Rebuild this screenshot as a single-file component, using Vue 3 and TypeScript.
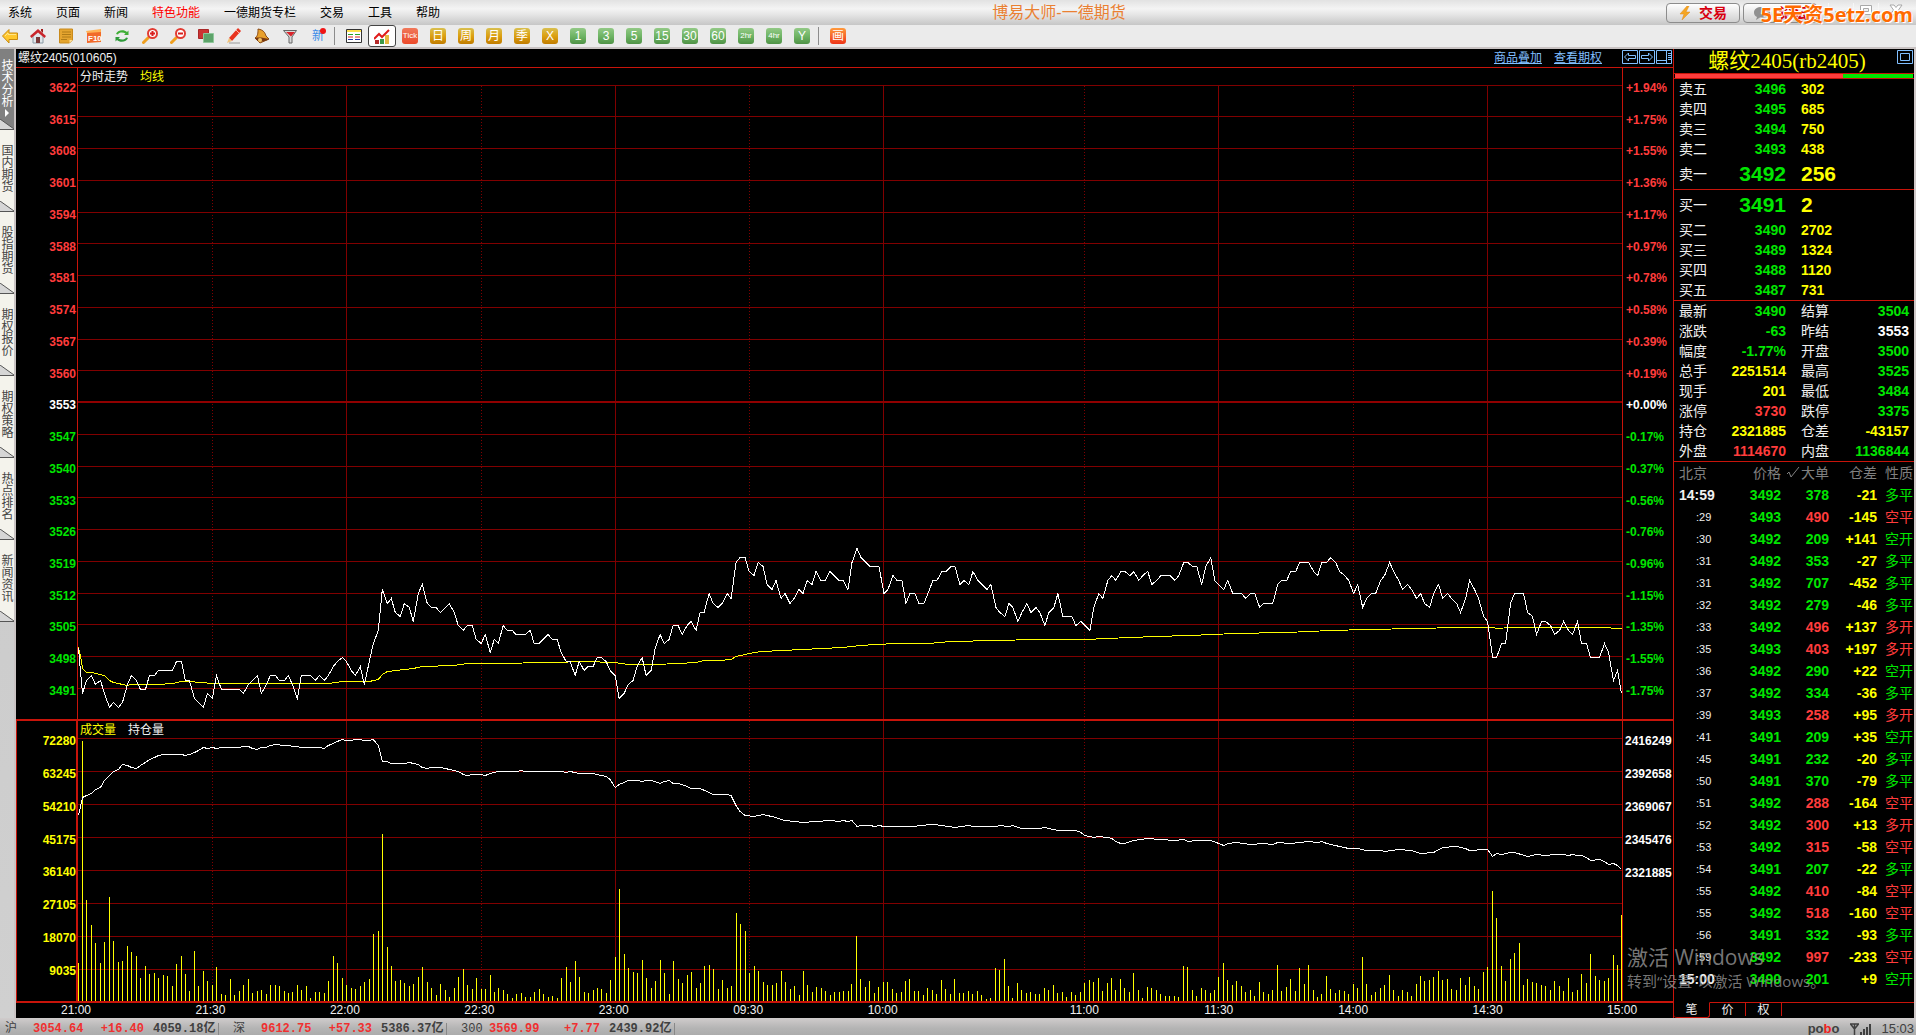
<script setup lang="ts">
interface Menu { text: string; hot?: boolean }
interface Level { name: string; price: string; qty: string; big?: boolean }
interface Stat { a: string; av: string; ac: string; b: string; bv: string; bc: string }
interface Tick { time: string; full?: boolean; price: string; qty: string; up: boolean; diff: string; kind: string }

const menus: Menu[] = [
  { text: '系统' }, { text: '页面' }, { text: '新闻' }, { text: '特色功能', hot: true },
  { text: '一德期货专栏' }, { text: '交易' }, { text: '工具' }, { text: '帮助' },
]

const periods = [
  { text: 'Tick', tone: 'red' }, { text: '日', tone: 'gold' }, { text: '周', tone: 'gold' },
  { text: '月', tone: 'gold' }, { text: '季', tone: 'gold' }, { text: 'X', tone: 'gold' },
  { text: '1', tone: 'green' }, { text: '3', tone: 'green' }, { text: '5', tone: 'green' },
  { text: '15', tone: 'green' }, { text: '30', tone: 'green' }, { text: '60', tone: 'green' },
  { text: '2hr', tone: 'green' }, { text: '4hr', tone: 'green' }, { text: 'Y', tone: 'green' },
]

const sideTabs = ['技术分析', '国内期货', '股指期货', '期权报价', '期权策略', '热点排名', '新闻资讯']

const priceLabels = ['3622', '3615', '3608', '3601', '3594', '3588', '3581', '3574', '3567', '3560', '3553',
  '3547', '3540', '3533', '3526', '3519', '3512', '3505', '3498', '3491']
const pctLabels = ['+1.94%', '+1.75%', '+1.55%', '+1.36%', '+1.17%', '+0.97%', '+0.78%', '+0.58%', '+0.39%', '+0.19%',
  '+0.00%', '-0.17%', '-0.37%', '-0.56%', '-0.76%', '-0.96%', '-1.15%', '-1.35%', '-1.55%', '-1.75%']
const volLabels = ['72280', '63245', '54210', '45175', '36140', '27105', '18070', '9035']
const oiLabels = ['2416249', '2392658', '2369067', '2345476', '2321885']
const tone = (i: number): string => (i < 10 ? 'up' : i === 10 ? 'flat' : 'down')

const priceGrid = [17, 48, 80, 112, 144, 175, 207, 239, 271, 302, 366, 398, 429, 461, 493, 525, 556, 588, 620]
const volGrid = [17, 50, 83, 116, 149, 182, 215, 248]

/* trading minutes between two neighbouring time marks */
const marks = [
  { text: '21:00', span: 30 }, { text: '21:30', span: 30 }, { text: '22:00', span: 30 }, { text: '22:30', span: 30 },
  { text: '23:00', span: 30 }, { text: '09:30', span: 30 }, { text: '10:00', span: 45 }, { text: '11:00', span: 30 },
  { text: '11:30', span: 30 }, { text: '14:00', span: 30 }, { text: '14:30', span: 30 }, { text: '15:00', span: 0 },
]
const minutes = 345
const width = 1545
const xAt = (i: number): number => Math.min(Math.floor((i * width) / minutes), width - 1) + 0.5
const solidX = [60, 120, 180, 255, 315].map(xAt)
const dottedX = [30, 90, 150, 225, 285].map(xAt)

/* last price per minute, counted from 3400 */
const prices = [
  100, 90, 93, 94, 92, 93, 90, 87, 88, 87, 88, 92, 94, 93, 91, 91, 94, 94, 95, 95, 95, 95, 97, 97, 93, 93, 89, 88, 87, 90,
  89, 94, 91, 91, 91, 91, 91, 90, 92, 93, 94, 90, 92, 94, 94, 93, 93, 94, 92, 89, 94, 94, 94, 93, 94, 93, 94, 96, 97, 98,
  97, 95, 94, 96, 92, 97, 101, 104, 113, 110, 111, 108, 107, 110, 109, 106, 112, 114, 110, 109, 109, 108, 109, 110, 108, 105, 104, 105, 105, 102,
  101, 103, 99, 102, 101, 105, 104, 104, 103, 103, 103, 104, 101, 101, 102, 103, 102, 102, 99, 97, 97, 94, 97, 95, 96, 96, 98, 98, 97, 95,
  94, 89, 90, 92, 93, 96, 98, 94, 95, 100, 103, 101, 102, 105, 105, 103, 105, 106, 104, 108, 108, 112, 110, 109, 110, 112, 111, 119, 120, 120,
  117, 116, 119, 118, 114, 113, 115, 111, 112, 110, 111, 113, 112, 115, 114, 117, 115, 115, 117, 116, 115, 115, 113, 119, 122, 120, 119, 118, 118, 118,
  112, 113, 116, 115, 115, 110, 112, 112, 110, 110, 112, 115, 115, 117, 117, 118, 118, 114, 115, 114, 117, 115, 114, 113, 114, 109, 108, 107, 110, 109,
  106, 108, 110, 108, 109, 108, 105, 108, 109, 112, 107, 107, 107, 105, 106, 105, 104, 109, 112, 111, 115, 116, 115, 117, 117, 116, 117, 115, 116, 117,
  114, 115, 116, 116, 116, 115, 116, 119, 119, 118, 118, 114, 118, 120, 115, 114, 113, 115, 112, 112, 112, 111, 112, 112, 109, 110, 110, 110, 114, 115,
  115, 117, 117, 119, 119, 119, 117, 116, 119, 119, 120, 119, 117, 116, 115, 112, 114, 109, 111, 112, 112, 115, 116, 119, 117, 115, 113, 114, 113, 111,
  112, 110, 109, 112, 114, 111, 112, 111, 110, 108, 111, 115, 113, 111, 107, 106, 98, 98, 101, 101, 110, 112, 112, 112, 108, 107, 103, 106, 106, 105,
  103, 104, 106, 104, 103, 106, 101, 101, 98, 98, 98, 101, 99, 93, 95, 90,
]
const priceLine = prices.map((p, i) => `${xAt(i)},${Math.round(620.6 - (p - 91) * 4.53) + 0.5}`).join(' ')

/* average price: minute, depth in thirds of a unit */
const average: number[][] = [
  [0, 352], [0.5, 375], [1, 415], [2, 427], [3, 428], [6, 437], [7, 451], [8, 458], [11, 466], [12, 463], [18, 463], [21, 459],
  [23, 454], [25, 455], [30, 459], [56, 460], [59, 455], [65, 454], [67, 447], [68, 432], [69, 423], [75, 414], [77, 409],
  [84, 405], [87, 401], [93, 399], [106, 397], [113, 395], [120, 397], [123, 402], [129, 403], [134, 399], [138, 396],
  [140, 392], [143, 390], [146, 387], [147, 380], [149, 374], [151, 368], [153, 365], [157, 361], [162, 358], [166, 355],
  [171, 352], [175, 347], [178, 344], [183, 341], [190, 339], [195, 335], [205, 332], [214, 328], [225, 328], [230, 325],
  [235, 323], [241, 320], [248, 317], [254, 314], [258, 311], [270, 308], [275, 304], [280, 301], [288, 298], [299, 295],
  [308, 292], [316, 292], [317, 295], [320, 292], [342, 292], [343, 295], [345, 295],
]
const averageLine = average.map(([i, c]) => `${xAt(i)},${Math.round(462 + c / 3 - 0.5) + 0.5}`).join(' ')

/* open interest: minute, depth in thirds of a unit */
const oiNight: number[][] = [
  [0, 345], [1, 293], [2, 287], [3, 279], [4, 268], [5, 262], [6, 240], [7, 226], [8, 215], [9, 208], [10, 193], [11, 196],
  [12, 202], [13, 206], [14, 197], [15, 187], [16, 177], [17, 172], [18, 167], [19, 163], [23, 163], [24, 166], [25, 163],
  [26, 156], [27, 151], [28, 143], [29, 145], [30, 143], [31, 145], [32, 142], [36, 142], [37, 139], [38, 139], [39, 145],
  [40, 149], [41, 142], [42, 142], [43, 136], [44, 133], [46, 136], [49, 139], [50, 142], [54, 142], [55, 144], [56, 136],
  [57, 131], [58, 124], [59, 118], [60, 121], [61, 121], [62, 118], [63, 118], [64, 121], [65, 121], [66, 118], [67, 136],
  [68, 184], [69, 185], [70, 190], [73, 190], [74, 187], [76, 193], [77, 202], [78, 205], [79, 202], [81, 202], [82, 205],
  [84, 211], [85, 215], [86, 222], [87, 226], [88, 223], [90, 223], [91, 226], [92, 220], [94, 214], [98, 214], [99, 211],
  [100, 214], [108, 214], [109, 217], [110, 214], [112, 220], [115, 220], [117, 226], [118, 229], [119, 238], [120, 263],
  [121, 252], [122, 247], [123, 241], [125, 241], [126, 244], [127, 241], [128, 241], [129, 244], [130, 250], [131, 244],
  [132, 241], [133, 250],
]
const oiDay: number[][] = [
  [134, 160], [136, 170], [137, 174], [139, 176], [141, 187], [142, 193], [145, 193], [146, 196], [147, 225], [148, 245],
  [149, 256], [151, 259], [153, 253], [156, 261], [157, 268], [158, 271], [160, 274], [162, 277], [165, 274], [168, 271],
  [170, 274], [171, 271], [172, 274], [173, 271], [174, 290], [175, 286], [177, 286], [178, 290], [179, 286], [180, 289],
  [187, 289], [188, 286], [191, 283], [193, 287], [196, 292], [199, 286], [200, 290], [205, 289], [206, 286], [208, 289],
  [209, 286], [210, 292], [211, 295], [215, 295], [216, 292], [219, 301], [223, 301], [224, 308], [225, 316], [226, 320],
  [227, 322], [228, 319], [230, 323], [231, 325], [232, 334], [233, 340], [234, 340], [236, 331], [239, 325], [242, 328],
  [245, 331], [247, 328], [248, 334], [250, 331], [253, 331], [255, 340], [256, 346], [257, 340], [259, 337], [262, 343],
  [265, 340], [267, 343], [268, 337], [271, 340], [275, 334], [277, 337], [278, 334], [279, 340], [282, 348], [284, 355],
  [286, 355], [288, 361], [291, 361], [292, 364], [295, 358], [298, 361], [300, 370], [303, 367], [305, 352], [308, 349],
  [310, 354], [311, 361], [312, 361], [313, 358], [315, 359], [316, 379], [317, 370], [318, 373], [320, 367], [321, 367],
  [324, 379], [326, 373], [328, 376], [330, 373], [332, 373], [333, 376], [334, 373], [335, 376], [336, 377], [337, 382],
  [338, 391], [340, 388], [341, 395], [342, 403], [343, 400], [344, 406], [345, 419],
]
const oiLine = [...oiNight, ...oiDay.map(([i, c]) => [i, c + 90])]
  .map(([i, c]) => `${xAt(i)},${Math.round(c / 3 - 21.5) + 0.5}`).join(' ')

/* volume bar tops per minute, in thirds of a unit */
const volNight = [
  789, 123, 600, 675, 729, 789, 726, 591, 723, 786, 783, 738, 756, 768, 834, 798, 822, 819, 834, 825, 828, 858, 792, 768, 822, 873, 753, 858, 813, 843,
  855, 801, 882, 885, 837, 885, 873, 855, 837, 879, 873, 870, 882, 855, 855, 858, 873, 879, 876, 855, 870, 858, 894, 876, 876, 879, 843, 768, 789, 834,
  855, 864, 867, 858, 846, 837, 702, 693, 402, 741, 798, 843, 840, 849, 858, 852, 831, 801, 846, 864, 885, 852, 870, 891, 864, 831, 807, 855, 867, 834,
  867, 867, 825, 876, 864, 870, 882, 894, 882, 879, 891, 891, 876, 867, 882, 891, 888, 894, 834, 801, 846, 783, 831, 876, 879, 870, 864, 867, 879, 840,
  771, 567, 762, 804, 816, 819, 780, 834, 864, 843, 780, 819, 882, 783, 837,
]
const volDay = [
  759, 735, 726, 774, 759, 708, 705, 717, 777, 750, 774, 768, 549, 582, 603, 729, 708, 723, 756, 765, 765, 759, 723, 756, 777, 768, 795, 723, 765, 786,
  771, 774, 783, 795, 786, 786, 783, 783, 762, 618, 747, 771, 753, 789, 771, 756, 756, 777, 789, 786, 753, 747, 783, 783, 795, 774, 780, 792, 750, 777,
  792, 747, 789, 789, 783, 792, 783, 795, 807, 804, 714, 720, 687, 768, 804, 759, 780, 789, 786, 792, 792, 774, 780, 765, 789, 786, 801, 786, 795, 786,
  759, 750, 756, 744, 783, 759, 744, 780, 747, 774, 786, 729, 780, 804, 771, 774, 780, 792, 798, 798, 798, 801, 708, 711, 780, 798, 774, 780, 789, 780,
  741, 699, 750, 765, 753, 768, 786, 780, 798, 756, 786, 792, 780, 705, 783, 771, 747, 783, 714, 762, 705, 780, 801, 792, 738, 777, 789, 780, 783, 792,
  762, 774, 681, 762, 795, 786, 774, 765, 735, 780, 798, 780, 786, 798, 762, 738, 753, 750, 741, 723, 750, 747, 777, 780, 744, 765, 741, 768, 777, 726,
  711, 483, 564, 708, 753, 687, 669, 639, 765, 747, 756, 759, 765, 768, 780, 753, 768, 783, 744, 786, 780, 732, 759, 672, 738, 750, 753, 744, 675, 705,
  555,
]
const volBars = [...volNight.map(v => 903 - v), ...volDay.map(v => 812 - v)]
  .map((h, i) => `M${xAt(i)} 280V${280 - Math.round(h / 3)}`).join('')

const asks: Level[] = [
  { name: '卖五', price: '3496', qty: '302' }, { name: '卖四', price: '3495', qty: '685' },
  { name: '卖三', price: '3494', qty: '750' }, { name: '卖二', price: '3493', qty: '438' },
  { name: '卖一', price: '3492', qty: '256', big: true },
]
const bids: Level[] = [
  { name: '买一', price: '3491', qty: '2', big: true }, { name: '买二', price: '3490', qty: '2702' },
  { name: '买三', price: '3489', qty: '1324' }, { name: '买四', price: '3488', qty: '1120' },
  { name: '买五', price: '3487', qty: '731' },
]
const stats: Stat[] = [
  { a: '最新', av: '3490', ac: 'down', b: '结算', bv: '3504', bc: 'down' },
  { a: '涨跌', av: '-63', ac: 'down', b: '昨结', bv: '3553', bc: 'flat' },
  { a: '幅度', av: '-1.77%', ac: 'down', b: '开盘', bv: '3500', bc: 'down' },
  { a: '总手', av: '2251514', ac: 'qty', b: '最高', bv: '3525', bc: 'down' },
  { a: '现手', av: '201', ac: 'qty', b: '最低', bv: '3484', bc: 'down' },
  { a: '涨停', av: '3730', ac: 'up', b: '跌停', bv: '3375', bc: 'down' },
  { a: '持仓', av: '2321885', ac: 'qty', b: '仓差', bv: '-43157', bc: 'qty' },
  { a: '外盘', av: '1114670', ac: 'up', b: '内盘', bv: '1136844', bc: 'down' },
]

const rawTicks = `14:59 3492 378 -21 多平
:29 3493 490 -145 空平
:30 3492 209 +141 空开
:31 3492 353 -27 多平
:31 3492 707 -452 多平
:32 3492 279 -46 多平
:33 3492 496 +137 多开
:35 3493 403 +197 多开
:36 3492 290 +22 空开
:37 3492 334 -36 多平
:39 3493 258 +95 多开
:41 3491 209 +35 空开
:45 3491 232 -20 多平
:50 3491 370 -79 多平
:51 3492 288 -164 空平
:52 3492 300 +13 多开
:53 3492 315 -58 空平
:54 3491 207 -22 多平
:55 3492 410 -84 空平
:55 3492 518 -160 空平
:56 3491 332 -93 多平
:59 3492 997 -233 空平
15:00 3490 201 +9 空开`
const ticks: Tick[] = rawTicks.split('\n').map(line => {
  const [time, price, qty, diff, kind] = line.split(' ')
  return { time, full: time.length > 3, price, qty, diff, kind, up: kind === '空平' || kind === '多开' }
})

const indices = [
  { name: '沪', price: '3054.64', change: '+16.40', amount: '4059.18亿' },
  { name: '深', price: '9612.75', change: '+57.33', amount: '5386.37亿' },
  { name: '300', price: '3569.99', change: '+7.77', amount: '2439.92亿' },
]
</script>

<template>
  <div class="app">
    <header class="menubar">
      <nav class="menus">
        <a v-for="m in menus" :key="m.text" href="#" :class="{ hot: m.hot }">{{ m.text }}</a>
      </nav>
      <h1>博易大师-一德期货</h1>
      <div class="window-tools">
        <button class="pill" type="button">
          <svg width="12" height="14" viewBox="0 0 12 14"><path d="M8 0L1 8h4L3 14l8-8H7l3-6z" fill="#f5a623" stroke="#e08a1a" stroke-width=".5" /></svg>
          交易
        </button>
        <button class="pill" type="button">
          <svg width="18" height="14" viewBox="0 0 18 14"><path d="M9 1C4 1 1 3 1 6.500c0 2 1 3.500 3 4.500L3 14l4-2.500c7 .5 10-2 10-5C17 3 14 1 9 1z" fill="#909090" /></svg>
          论坛
        </button>
        <button class="win" type="button" aria-label="最小化"><svg width="14" height="14" viewBox="0 0 14 14"><path d="M1.500 8.500h11v3h-11z" fill="#fff" stroke="#a8a8a8" /></svg></button>
        <button class="win" type="button" aria-label="最大化"><svg width="14" height="14" viewBox="0 0 14 14"><path d="M1.500 2.500h11v9h-11zM4.500 5.500h5v3h-5z" fill="#fff" fill-rule="evenodd" stroke="#a8a8a8" /></svg></button>
        <button class="win last" type="button" aria-label="关闭"><svg width="14" height="14" viewBox="0 0 14 14"><path d="M1 2h4l2 2.500L9 2h4L9.500 7l3.500 5H9L7 9.500 5 12H1l3.500-5z" fill="#fff" stroke="#a8a8a8" /></svg></button>
      </div>
      <div class="brand">5E天资5etz.com</div>
    </header>

    <div class="toolbar">
      <button type="button" aria-label="后退" class="tool"><svg viewBox="0 0 16 16"><path d="M.5 8L7 1.500V5h8.500v6.500H7V15z" fill="#ffc72c" stroke="#c98a10" /><path d="M3 8l3-3v1.500h8" fill="none" stroke="#ffe58a" /></svg></button>
      <button type="button" aria-label="首页" class="tool"><svg viewBox="0 0 16 16"><path d="M3 8v7h10V8L8 3z" fill="#dfe6ea" stroke="#8b9aa5" /><path d="M0 8l8-7 8 7-1.500 2L8 4.500 1.500 10z" fill="#c9252b" /><path d="M11 1h2v4l-2-2z" fill="#a01a1a" /><path d="M6 9h4v6H6z" fill="#7a3a3a" /></svg></button>
      <button type="button" aria-label="公告" class="tool"><svg viewBox="0 0 16 16"><path d="M1.500 1h13v11l-3 3h-10z" fill="#e5a52f" stroke="#c98a1c" /><path d="M4 4h9M4 6.500h9M4 9h9M3 11.500h6" stroke="#b07c18" /><path d="M14.500 12h-3v3z" fill="#ffe29a" /></svg></button>
      <button type="button" aria-label="F10" class="tool"><svg viewBox="0 0 16 16"><path d="M1 4l14-1v11l-14 1z" fill="#f26a2a" /><path d="M0 3l15-2v3L1 5z" fill="#ffb257" /><text x="2" y="13" class="f10">F10</text></svg></button>
      <button type="button" aria-label="刷新" class="tool"><svg viewBox="0 0 16 16"><path d="M2 6c1-4 8-5 11-2l1.500-1.500V7H10l1.500-1.500C9 4 5 4 4 6.500z" fill="#3fae35" /><path d="M14 10c-1 4-8 5-11 2l-1.500 1.500V9H6l-1.500 1.500C7 12 11 12 12 9.500z" fill="#2f9a3a" /></svg></button>
      <button type="button" aria-label="放大" class="tool"><svg viewBox="0 0 16 16"><path d="M1.500 14.500l5-5" stroke="#f0a020" stroke-width="3" stroke-linecap="round" /><circle cx="10.500" cy="5.500" r="4.500" fill="#fff" stroke="#e23b32" stroke-width="2" /><path d="M8 5.500h5M10.500 3v5" stroke="#d81e1e" stroke-width="2" /></svg></button>
      <button type="button" aria-label="缩小" class="tool"><svg viewBox="0 0 16 16"><path d="M1.500 14.500l5-5" stroke="#f0a020" stroke-width="3" stroke-linecap="round" /><circle cx="10.500" cy="5.500" r="4.500" fill="#fff" stroke="#e23b32" stroke-width="2" /><path d="M8 5.500h5" stroke="#d81e1e" stroke-width="2" /></svg></button>
      <button type="button" aria-label="叠加" class="tool"><svg viewBox="0 0 16 16"><path d="M.5 1.500h10v9H.5z" fill="#cc3433" stroke="#a82828" /><path d="M5.500 5.500h10v9h-10z" fill="#5da36a" stroke="#8fc79a" /></svg></button>
      <button type="button" aria-label="画笔" class="tool"><svg viewBox="0 0 16 16"><path d="M12 0l3 3-9 10-3-3z" fill="#e8331f" /><path d="M10 2l3 3" stroke="#ffb0a0" /><path d="M3 10l3 3-5 2z" fill="#f1c27a" /><path d="M3 15h11" stroke="#9a9a9a" /></svg></button>
      <button type="button" aria-label="预警" class="tool"><svg viewBox="0 0 16 16"><path d="M4 1c6 1 7 4 8 7l3 3-9 4-5-5c3-2 3-5 3-9z" fill="#e8a02c" stroke="#8a4a16" /><path d="M1 10c3-1 10 0 14 1-3 3-12 4-14-1z" fill="#7a3a12" /><circle cx="6" cy="12" r="2" fill="#f3c46a" /></svg></button>
      <button type="button" aria-label="筛选" class="tool"><svg viewBox="0 0 16 16"><path d="M1.500 2.500h13L10 9v6H7V9z" fill="#d8d8d8" stroke="#666" /><path d="M4 4h9l-4 4.500z" fill="#d8232a" /></svg></button>
      <button type="button" class="tool fresh">新<i></i></button>
      <span class="sep"></span>
      <button type="button" aria-label="报价" class="tool"><svg viewBox="0 0 16 16"><path d="M.5 1.500h15v13H.5z" fill="#fff" stroke="#333" /><path d="M1 2h14v2H1z" fill="#ffe14d" /><path d="M2 6.500h5M9 6.500h5" stroke="#2aa02a" /><path d="M2 9h5M9 9h5" stroke="#d22" /><path d="M2 11.500h5M9 11.500h5" stroke="#23a" /></svg></button>
      <button type="button" aria-label="分时走势" class="tool active"><svg viewBox="0 0 16 16"><path d="M1 12h4v4H1z" fill="#b52a2a" /><path d="M6 11h4v5H6z" fill="#3c9a48" /><path d="M11 7h4v9h-4z" fill="#e6b840" /><path d="M0 11l5-5 3 3 7-7" stroke="#e01b1b" stroke-width="2" fill="none" /></svg></button>
      <button v-for="p in periods" :key="p.text" type="button" class="tool">
        <span class="tile" :class="[p.tone, { long: p.text.length > 2 }]">{{ p.text }}</span>
      </button>
      <span class="sep"></span>
      <button type="button" class="tool"><span class="tile fire">画</span></button>
    </div>

    <main class="body">
      <nav class="side-tabs">
        <a v-for="(t, i) in sideTabs" :key="t" href="#" :class="{ on: i === 0 }">
          <span>{{ t }}</span>
          <svg v-if="i === 0" class="arrow" viewBox="0 0 4 8"><path d="M0 0l4 4-4 4z" fill="#fff" /></svg>
          <svg class="fold" viewBox="0 0 14 10"><path d="M0 0l14 10H0z" fill="#d6d6d6" /><path d="M0 0l14 10" stroke="#555" /></svg>
        </a>
      </nav>

      <section class="chart">
        <div class="chart-head">
          <span>螺纹2405(010605)</span>
          <div class="chart-links">
            <a href="#">商品叠加</a>
            <a href="#">查看期权</a>
          </div>
          <button type="button" aria-label="上一个" class="box"><svg viewBox="0 0 16 14"><path d="M.5.5h15v13H.5z" /><path d="M2.500 7L6.500 3v2.500h7v3h-7V11z" /></svg></button>
          <button type="button" aria-label="下一个" class="box"><svg viewBox="0 0 16 14"><path d="M.5.5h15v13H.5z" /><path d="M13.500 7L9.500 3v2.500h-7v3h7V11z" /></svg></button>
          <button type="button" aria-label="布局" class="box"><svg viewBox="0 0 16 14"><path d="M.5.5h15v13H.5zM10.500 1v12M1 10.500h9M12 3.500h3M12 5.500h3M12 7.500h3M12 9.500h3" /></svg></button>
        </div>

        <div class="pane price-pane">
          <div class="axis left">
            <span v-for="(l, i) in priceLabels" :key="l" :class="tone(i)">{{ l }}</span>
          </div>
          <div class="plot">
            <svg viewBox="0 0 1545 651" preserveAspectRatio="none">
              <g class="grid">
                <path v-for="y in priceGrid" :key="y" :d="`M0 ${y + 0.5}H1545`" />
                <path v-for="x in solidX" :key="x" :d="`M${x} 17V651`" />
                <path v-for="x in dottedX" :key="x" class="dots" :d="`M${x} 18V651`" />
                <path class="zero" d="M0 334H1545" />
              </g>
              <polyline class="avg" :points="averageLine" />
              <polyline class="last" :points="priceLine" />
            </svg>
            <div class="legend"><span>分时走势</span><span class="qty">均线</span></div>
          </div>
          <div class="axis right">
            <span v-for="(l, i) in pctLabels" :key="l" :class="tone(i)">{{ l }}</span>
          </div>
        </div>

        <div class="pane volume-pane">
          <div class="axis left">
            <span v-for="l in volLabels" :key="l" class="qty">{{ l }}</span>
          </div>
          <div class="plot">
            <svg viewBox="0 0 1545 280" preserveAspectRatio="none">
              <g class="grid">
                <path v-for="y in volGrid" :key="y" :d="`M0 ${y + 0.5}H1545`" />
                <path v-for="x in solidX" :key="x" :d="`M${x} 0V280`" />
                <path v-for="x in dottedX" :key="x" class="dots" :d="`M${x} 0V280`" />
              </g>
              <path class="bars" :d="volBars" />
              <polyline class="last" :points="oiLine" />
            </svg>
            <div class="legend"><span class="qty">成交量</span><span>持仓量</span></div>
          </div>
          <div class="axis right">
            <span v-for="l in oiLabels" :key="l" class="flat">{{ l }}</span>
          </div>
        </div>

        <div class="times">
          <div v-for="m in marks" :key="m.text" :style="{ flexGrow: m.span }"><span>{{ m.text }}</span></div>
        </div>
      </section>

      <aside class="quote">
        <div class="quote-head">
          <h2>螺纹2405(rb2405)</h2>
          <button type="button" aria-label="展开" class="box corner"><svg viewBox="0 0 16 14"><path d="M.5.5h15v13H.5zM3.500 3.500h9v7h-9z" /></svg></button>
        </div>
        <div class="ratio"><i class="sell"></i><i class="buy"></i></div>
        <div class="book">
          <div v-for="l in asks" :key="l.name" class="level" :class="{ big: l.big }">
            <span>{{ l.name }}</span><b class="down">{{ l.price }}</b><b class="qty">{{ l.qty }}</b>
          </div>
        </div>
        <div class="book">
          <div v-for="l in bids" :key="l.name" class="level" :class="{ big: l.big }">
            <span>{{ l.name }}</span><b class="down">{{ l.price }}</b><b class="qty">{{ l.qty }}</b>
          </div>
        </div>
        <div class="stats">
          <div v-for="s in stats" :key="s.a" class="stat">
            <span>{{ s.a }}</span><b :class="s.ac">{{ s.av }}</b>
            <span>{{ s.b }}</span><b :class="s.bc">{{ s.bv }}</b>
          </div>
        </div>
        <table class="ticks">
          <thead>
            <tr><th class="t">北京</th><th class="p">价格</th><th class="q"><svg width="13" height="12" viewBox="0 0 13 12"><path d="M0 8l2-2 2 5L12 1" fill="none" stroke="#808080" /></svg>大单</th><th class="d">仓差</th><th class="k">性质</th></tr>
          </thead>
          <tbody>
            <tr v-for="(t, i) in ticks" :key="i">
              <td class="t" :class="{ full: t.full }">{{ t.time }}</td>
              <td class="p down">{{ t.price }}</td>
              <td class="q" :class="t.up ? 'up' : 'down'">{{ t.qty }}</td>
              <td class="d qty">{{ t.diff }}</td>
              <td class="k" :class="t.up ? 'up' : 'down'">{{ t.kind }}</td>
            </tr>
          </tbody>
        </table>
        <div class="quote-tabs">
          <button type="button" class="on">笔</button>
          <button type="button">价</button>
          <button type="button">权</button>
          <span></span>
        </div>
      </aside>

      <div class="activate">
        <p>激活 Windows</p>
        <small>转到“设置”以激活 Windows。</small>
      </div>
    </main>

    <footer class="status">
      <div v-for="x in indices" :key="x.name" class="index">
        <span class="name">{{ x.name }}</span>
        <b class="val">{{ x.price }}</b>
        <b class="chg">{{ x.change }}</b>
        <span class="amt">{{ x.amount }}</span>
      </div>
      <div class="tray">
        <b>po<i>b</i>o</b>
        <svg width="22" height="12" viewBox="0 0 22 12"><path d="M1 1h9M1.500 1L5.500 6 9.500 1M5.500 1v11" fill="none" stroke="#404040" stroke-width="1.500" /><path d="M11 9h2v3h-2zM14 6h2v6h-2zM17 4h2v8h-2zM20 1h2v11h-2z" fill="#404040" /></svg>
        <time>15:03</time>
      </div>
    </footer>
  </div>
</template>

<style>
body { margin: 0; background: #000; }
</style>

<style scoped>
* { box-sizing: border-box; }
.app {
  height: 100vh;
  display: flex;
  flex-direction: column;
  overflow: hidden;
  background: #c8c8c8;
  color: #f0f0f0;
  font: 12px/16px "Liberation Sans", "Noto Sans CJK SC", sans-serif;
}
button { margin: 0; padding: 0; border: 0; background: none; font: inherit; color: inherit; }
a { color: inherit; text-decoration: none; }
svg { display: block; }
.up { color: #ff3c3c; }
.down { color: #00e600; }
.flat { color: #fff; }
.qty { color: #ff0; }

.menubar {
  position: relative;
  flex: none;
  height: 25px;
  display: flex;
  align-items: center;
  background: linear-gradient(#e2e2e2, #f4f4f4 35%, #e4e4e4 60%, #c6c6c6);
  color: #000;
}
.menus { flex: 1; display: flex; gap: 24px; padding-left: 8px; }
.hot { color: #f00; }
h1 { margin: 0 0 0 196px; font-size: 16px; font-weight: 400; line-height: 24px; color: #ea8032; }
.window-tools { flex: 1; display: flex; justify-content: flex-end; align-items: center; padding-right: 2px; }
.pill {
  width: 74px;
  height: 20px;
  margin-right: 3px;
  display: flex;
  align-items: center;
  justify-content: center;
  gap: 8px;
  border: 1px solid #8c8c8c;
  border-radius: 4px;
  background: linear-gradient(#fff, #d0d0d0);
  color: #d80010;
  font-size: 14px;
  font-weight: 700;
}
.win { width: 25px; height: 20px; display: flex; justify-content: center; border-left: 1px solid #f6f6f6; }
.win.last { width: 34px; margin-right: 2px; }
.pill + .win { margin-left: 8px; }
.brand {
  position: absolute;
  right: 3px;
  top: 2px;
  color: #ff6a00;
  font: 700 20px/26px "Open Sans", "Noto Sans CJK SC", sans-serif;
  text-shadow: 1px 1px 0 #fff, -1px -1px 0 #fff;
}

.toolbar {
  flex: none;
  height: 24px;
  display: flex;
  background: #ebebeb;
  border-bottom: 2px solid #c9c3c3;
  overflow: hidden;
}
.tool { flex: none; width: 28px; height: 22px; display: flex; align-items: center; justify-content: center; }
.tool:first-child { width: 24px; padding-right: 4px; }
.tool svg { width: 16px; height: 16px; flex: none; }
.tool.active { border: 1px solid #444; border-radius: 3px; background: #fff; }
.f10 { font: 700 8px "Liberation Sans", sans-serif; fill: #fff; }
.fresh { position: relative; color: #3d8be8; }
.fresh i { position: absolute; right: 6px; top: 3px; width: 6px; height: 6px; border-radius: 50%; background: #f01414; }
.sep { flex: none; width: 8px; margin: 2px 0; background: linear-gradient(#8c8c8c, #8c8c8c) 2px 0 / 1px 100% no-repeat; }
.tile {
  width: 16px;
  height: 16px;
  display: flex;
  align-items: center;
  justify-content: center;
  border-radius: 3px;
  color: #fff;
  line-height: 16px;
}
.tile.long { font-size: 8px; }
.gold { background: linear-gradient(#d8bf50, #dca010 50%, #c07c00); }
.green { background: linear-gradient(#93c986, #6fb565 50%, #4f9246); }
.red { background: linear-gradient(#f0785a, #ec4a2a); }
.fire { background: linear-gradient(#ff9a3c, #ee3418); }

.body { position: relative; flex: 1; min-height: 0; display: flex; padding-right: 2px; background: #cfc8c8; }

.side-tabs { flex: none; width: 16px; background: linear-gradient(#c8c8c8, #d0d0d0); border-right: 2px solid #c9c3c3; }
.side-tabs a {
  position: relative;
  height: 82px;
  width: 14px;
  padding-top: 14px;
  display: flex;
  flex-direction: column;
  align-items: flex-start;
  background: #f4f3ec;
  border-bottom: 1px solid #555;
  color: #444;
}
.side-tabs a.on { height: 81px; padding-top: 10px; background: #808080; color: #fff; }
.side-tabs span { writing-mode: vertical-rl; line-height: 12px; }
.arrow { width: 4px; height: 8px; margin: 2px 0 0 5px; }
.fold { position: absolute; left: 0; bottom: 0; width: 14px; height: 10px; }

.chart { flex: 1; min-width: 0; display: flex; flex-direction: column; background: #000; }
.chart-head { flex: none; height: 19px; display: flex; gap: 1px; align-items: flex-start; padding: 1px 1px 0 2px; border-bottom: 1px solid #c8140a; color: #f0f0f0; }
.chart-links { margin-left: auto; margin-right: 19px; display: flex; gap: 12px; color: #80bfff; }
.chart-links a { text-decoration: underline; }
.box { flex: none; width: 16px; height: 14px; }
.box svg { width: 16px; height: 14px; fill: none; stroke: #80bfff; }

.pane { min-height: 0; display: flex; border-bottom: 2px solid #c8140a; }
.price-pane { flex: 651 1 0; }
.volume-pane { flex: 280 1 0; border-left: 1px solid #c8140a; }
.axis { flex: none; display: flex; flex-direction: column; justify-content: space-between; font-weight: 700; }
.axis.left { width: 61px; text-align: right; }
.axis.right { width: 50px; padding-left: 2px; }
.price-pane .axis { padding: 12px 1px 20px 3px; }
.volume-pane .axis { padding-top: 12px; padding-bottom: 22px; }
.volume-pane .axis.left { width: 60px; border-right: 1px solid #c8140a; }
.volume-pane .axis.right { justify-content: flex-start; gap: 17px; }
.plot { position: relative; flex: 1; min-width: 0; border: solid #c8140a; border-width: 0 1px; }
.plot svg { width: 100%; height: 100%; shape-rendering: crispEdges; }
.plot path, .plot polyline { fill: none; vector-effect: non-scaling-stroke; }
.grid { stroke: #800000; }
.dots { stroke-dasharray: 1 2; }
.zero { stroke: #900000; stroke-width: 2; }
.avg { stroke: #ff0; }
.last { stroke: #fff; }
.bars { stroke: #ff0; }
.legend { position: absolute; left: 2px; top: 1px; display: flex; gap: 12px; }

.times { flex: none; height: 15px; display: flex; padding: 0 50px 0 61px; line-height: 15px; }
.times div { flex: 0 0 0; width: 0; white-space: nowrap; }
.times span { display: block; width: 30px; margin-left: -16px; text-align: center; }

.quote { flex: none; width: 241px; display: flex; flex-direction: column; border-left: 1px solid #c8140a; background: #000; font-size: 14px; line-height: 20px; }
.quote-head { position: relative; flex: none; height: 24px; text-align: center; }
h2 { margin: 0; padding-right: 14px; font: 400 21px/24px "Liberation Serif", "Noto Sans CJK SC", serif; color: #ff0; }
.corner { position: absolute; right: 1px; top: 1px; }
.ratio { flex: none; height: 6px; display: flex; border: solid #c8140a; border-width: 1px 0; padding: 0 1px; }
.sell { flex: 504; background: #ff3c3c; }
.buy { flex: 211; background: #00e600; }
.book, .stats { flex: none; padding: 0 5px; border-bottom: 1px solid #c8140a; }
.level { height: 20px; display: grid; grid-template-columns: 28px 79px 1fr; align-items: center; }
.level b:nth-child(2) { text-align: right; }
.level b:nth-child(3) { padding-left: 15px; }
.level.big { height: 30px; }
.level.big b { font-size: 21px; }
.stat { height: 20px; display: grid; grid-template-columns: 28px 79px 43px 80px; align-items: center; }
.stat b { text-align: right; }
.stat span:nth-child(3) { padding-left: 15px; }

.ticks { flex: none; width: 100%; table-layout: fixed; border-collapse: collapse; text-align: right; font-weight: 700; }
.ticks tr { height: 22px; }
.ticks th, .ticks td { padding: 0; white-space: nowrap; }
.ticks th { color: #808080; font-weight: 400; }
.ticks th svg { display: inline-block; margin-right: 1px; }
.ticks .t { width: 49px; padding-left: 5px; text-align: left; }
.ticks td.t { padding-left: 22px; font-size: 11px; font-weight: 400; }
.ticks td.t.full { padding-left: 5px; font-size: 14px; font-weight: 700; }
.ticks .p { width: 58px; }
.ticks .q { width: 48px; }
.ticks .d { width: 48px; }
.ticks .k { width: 37px; padding-right: 1px; font-weight: 400; }

.quote-tabs { flex: none; height: 16px; margin-top: auto; display: flex; font-size: 12px; line-height: 15px; }
.quote-tabs button { width: 36px; height: 14px; border-top: 1px solid #c8140a; border-right: 1px solid #c8140a; }
.quote-tabs .on { height: 16px; border-top-color: transparent; border-bottom: 1px solid #c8140a; border-radius: 0 0 3px 3px; }
.quote-tabs span { flex: 1; border-top: 1px solid #c8140a; }

.activate {
  position: absolute;
  right: 92px;
  bottom: 26px;
  width: 197px;
  white-space: nowrap;
  color: rgba(150, 150, 150, .8);
  font-family: "Open Sans", "Noto Sans CJK SC", sans-serif;
  pointer-events: none;
}
.activate p { margin: 0; font-size: 21px; line-height: 26px; }
.activate small { display: block; font-size: 15px; line-height: 22px; }

.status {
  flex: none;
  height: 17px;
  padding-top: 5px;
  display: flex;
  overflow: hidden;
  background: linear-gradient(#d0cccc, #b4b4b4 60%, #acacac);
  color: #404040;
  font: 12px/12px "Liberation Mono", "Noto Sans CJK SC", monospace;
}
.index { flex: none; width: 228px; padding-left: 5px; display: flex; background: linear-gradient(#888, #888) 218px 0 / 1px 100% no-repeat; }
.index > * { height: 12px; }
.name { width: 28px; }
.val { width: 50px; color: #f03030; }
.chg { width: 61px; text-align: right; color: #f03030; }
.amt { margin-left: 9px; font-weight: 700; }
.tray { margin-left: auto; padding-right: 2px; display: flex; align-items: center; gap: 10px; font: 13px/12px "Liberation Sans", sans-serif; }
.tray b i { font-style: normal; color: #f02020; }
</style>
